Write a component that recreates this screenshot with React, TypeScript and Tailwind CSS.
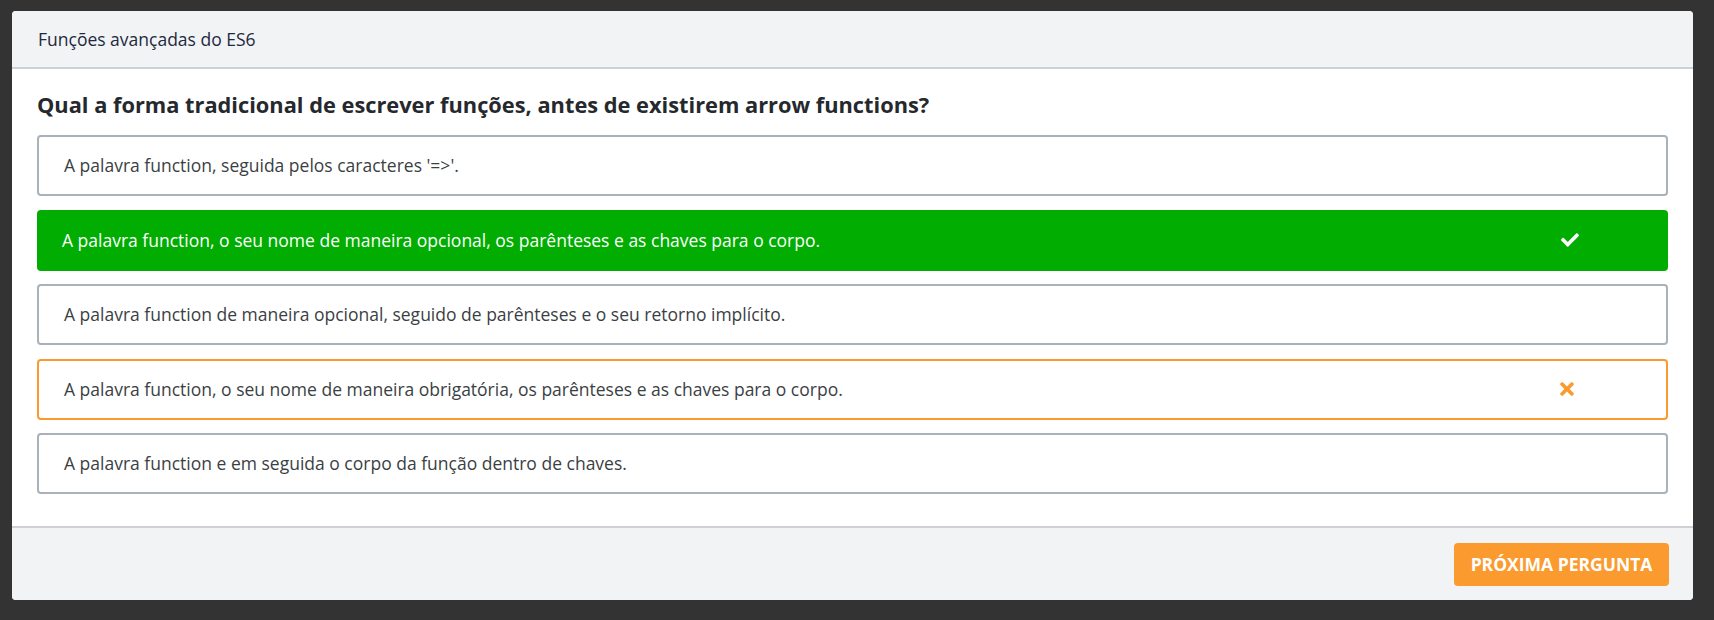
import React from 'react'
import { FaCheck, FaTimes } from 'react-icons/fa'

type Status = 'none' | 'correct' | 'wrong'

interface Option {
  text: string
  status: Status
}

const options: Option[] = [
  { text: "A palavra function, seguida pelos caracteres '=>'.", status: 'none' },
  { text: 'A palavra function, o seu nome de maneira opcional, os parênteses e as chaves para o corpo.', status: 'correct' },
  { text: 'A palavra function de maneira opcional, seguido de parênteses e o seu retorno implícito.', status: 'none' },
  { text: 'A palavra function, o seu nome de maneira obrigatória, os parênteses e as chaves para o corpo.', status: 'wrong' },
  { text: 'A palavra function e em seguida o corpo da função dentro de chaves.', status: 'none' },
]

const OptionRow = ({ option }: { option: Option }) => {
  const base = 'flex h-[61px] items-center rounded-[4px] pl-[25px] pr-[89px] text-[17.5px]'
  if (option.status === 'correct') {
    return (
      <div className={`${base} justify-between bg-[#00ad00] font-medium text-white`}>
        <span>{option.text}</span>
        <FaCheck className="h-[18px] w-[18px]" />
      </div>
    )
  }
  if (option.status === 'wrong') {
    return (
      <div className={`${base} justify-between border-2 border-[#fb9a2e] bg-white text-[#3b3f44]`}>
        <span>{option.text}</span>
        <FaTimes className="h-[20px] w-[20px] text-[#fb9a2e]" />
      </div>
    )
  }
  return (
    <div className={`${base} border-2 border-[#a9b1ba] bg-white text-[#3b3f44]`}>
      <span>{option.text}</span>
    </div>
  )
}

export default function App() {
  return (
    <div
      className="min-h-[620px] bg-[#333333] pt-[11px] pl-[12px] pr-[21px] pb-[20px]"
      style={{ fontFamily: '"Open Sans", "Noto Sans", sans-serif' }}
    >
      <div className="overflow-hidden rounded-[4px] bg-white">
        <div className="flex h-[58px] items-center border-b-2 border-[#cdd1d5] bg-[#f2f3f5] px-[26px] text-[17.5px] text-[#1e2a40]">
          Funções avançadas do ES6
        </div>
        <div className="px-[25px] pt-[21px] pb-[32px]">
          <h2 className="mb-[15px] text-[21.8px] font-bold leading-[30px] text-[#25292d]">
            Qual a forma tradicional de escrever funções, antes de existirem arrow functions?
          </h2>
          <div className="flex flex-col gap-[13.5px]">
            {options.map((o, i) => (
              <OptionRow key={i} option={o} />
            ))}
          </div>
        </div>
        <div className="flex h-[74px] items-start justify-end border-t-2 border-[#cdd1d5] bg-[#f2f3f5] pt-[15px] pr-[24px]">
          <button className="h-[43px] w-[215px] rounded-[4px] bg-[#fb9a2e] text-[17.5px] font-bold text-white">
            PRÓXIMA PERGUNTA
          </button>
        </div>
      </div>
    </div>
  )
}
